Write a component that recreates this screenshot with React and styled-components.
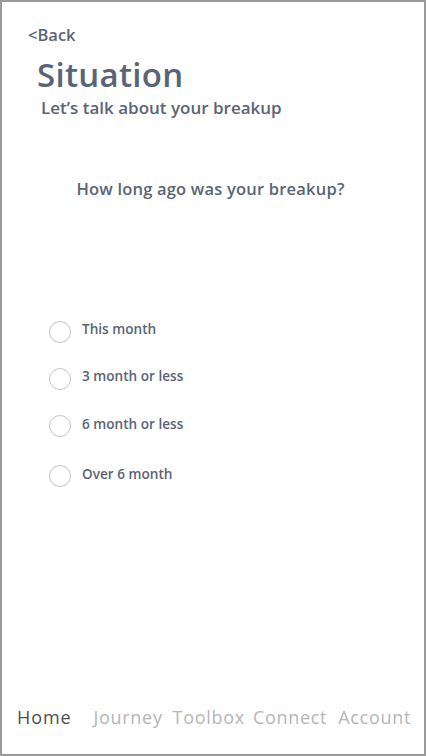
import React from "react";
import styled, { createGlobalStyle } from "styled-components";

const GlobalStyle = createGlobalStyle`
  html, body {
    margin: 0;
    padding: 0;
    background: #fff;
  }
  * {
    box-sizing: border-box;
  }
`;

const Frame = styled.div`
  width: 426px;
  height: 756px;
  border: 2px solid #9a9a9a;
  display: flex;
  flex-direction: column;
  font-family: "Open Sans", "Noto Sans", sans-serif;
  color: #5a6477;
  background: #fff;
`;

const Header = styled.header`
  padding: 22px 0 0 26px;
  display: flex;
  flex-direction: column;
`;

const BackLink = styled.a`
  font-size: 16.5px;
  line-height: 22px;
  font-weight: 600;
  color: #5a6477;
  text-decoration: none;
  cursor: pointer;
`;

const Title = styled.h1`
  margin: 9px 0 0 9px;
  font-size: 33px;
  line-height: 40px;
  font-weight: 600;
  letter-spacing: 0.3px;
`;

const Subtitle = styled.p`
  margin: 1px 0 0 13px;
  font-size: 17px;
  line-height: 24px;
  font-weight: 600;
`;

const Question = styled.h2`
  margin: 57px 0 0;
  padding-right: 5px;
  text-align: center;
  font-size: 16.5px;
  line-height: 24px;
  font-weight: 600;
  letter-spacing: 0.2px;
`;

const Options = styled.ul`
  list-style: none;
  margin: 104px 0 0;
  padding: 0 0 0 47px;
  display: flex;
  flex-direction: column;
`;

const Option = styled.li`
  display: flex;
  align-items: center;
  gap: 11px;
  height: ${({ $h }) => $h}px;
  font-size: 13.6px;
  font-weight: 600;
  cursor: pointer;
`;

const Radio = styled.span`
  width: 22px;
  height: 22px;
  border-radius: 50%;
  border: 1px solid #c4c4c4;
  flex-shrink: 0;
  position: relative;
  top: ${({ $dy }) => $dy}px;
`;

const Label = styled.span`
  line-height: 20px;
`;

const Spacer = styled.div`
  flex: 1;
`;

const Nav = styled.nav`
  display: flex;
  align-items: center;
  padding: 0 0 25px 15px;
`;

const NavItem = styled.a`
  font-size: 18px;
  line-height: 24px;
  font-weight: 400;
  letter-spacing: ${({ $active }) => ($active ? "0.9px" : "0.7px")};
  color: ${({ $active }) => ($active ? "#4f4f4f" : "#b6b6b6")};
  margin-right: ${({ $mr }) => $mr}px;
  cursor: pointer;
`;

const options = [
  { label: "This month", h: 47, dy: 3 },
  { label: "3 month or less", h: 47, dy: 3 },
  { label: "6 month or less", h: 50, dy: 2 },
  { label: "Over 6 month", h: 50, dy: 2 },
];

const navItems = [
  { label: "Home", active: true, mr: 22 },
  { label: "Journey", mr: 10 },
  { label: "Toolbox", mr: 8 },
  { label: "Connect", mr: 11 },
  { label: "Account", mr: 0 },
];

export default function App() {
  return (
    <>
      <GlobalStyle />
      <Frame>
        <Header>
          <BackLink>&lt;Back</BackLink>
          <Title>Situation</Title>
          <Subtitle>Let’s talk about your breakup</Subtitle>
        </Header>
        <Question>How long ago was your breakup?</Question>
        <Options>
          {options.map((o) => (
            <Option key={o.label} $h={o.h}>
              <Radio $dy={o.dy} />
              <Label>{o.label}</Label>
            </Option>
          ))}
        </Options>
        <Spacer />
        <Nav>
          {navItems.map((n) => (
            <NavItem key={n.label} $active={n.active} $mr={n.mr}>
              {n.label}
            </NavItem>
          ))}
        </Nav>
      </Frame>
    </>
  );
}
